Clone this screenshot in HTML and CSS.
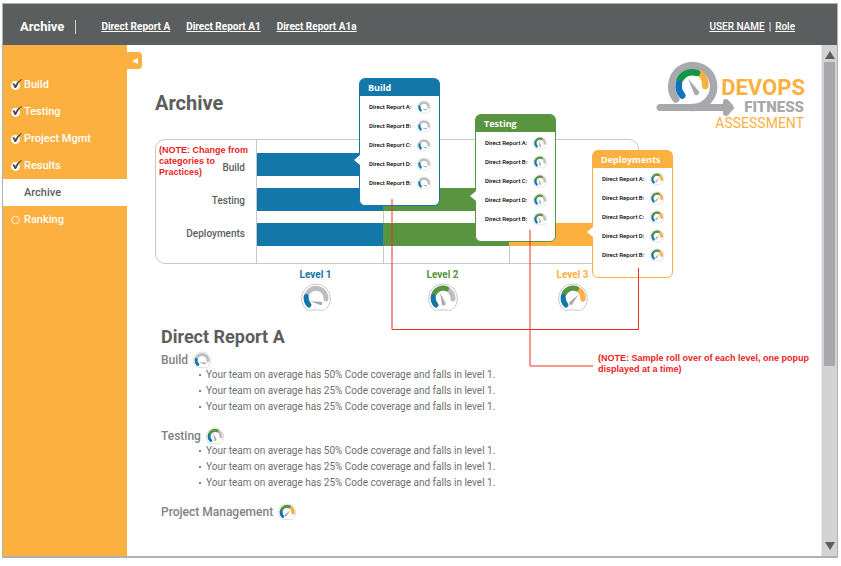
FILE: index.html
```html
<!DOCTYPE html>
<html lang="en">
<head>
<meta charset="utf-8">
<title>Archive</title>
<link rel="stylesheet" href="styles.css">
</head>
<body>
<svg class="defs" aria-hidden="true">
  <symbol id="dial" viewBox="0 0 30 29">
    <path d="M5.5 26.2A14.4 14.4 0 1 1 24.5 26.2C22 28.6 19.5 26.8 15 26.8S8 28.6 5.5 26.2Z" fill="#fff" stroke="#c7c8ca"/>
    <path d="M6 11A10 10 0 0 1 25 16" fill="none" stroke="#bcbdc0" stroke-width="5" stroke-linecap="round"/>
  </symbol>
  <symbol id="blue-arc" viewBox="0 0 30 29">
    <path d="M8 22A10 10 0 0 1 5.2 13.5" fill="none" stroke="#1477a9" stroke-width="5" stroke-linecap="round"/>
  </symbol>
  <symbol id="green-arc" viewBox="0 0 30 29">
    <path d="M6 11A10 10 0 0 1 18.500 5.600" fill="none" stroke="#599441" stroke-width="5" stroke-linecap="round"/>
  </symbol>
  <symbol id="level1" viewBox="0 0 30 29">
    <use href="#dial"/><use href="#blue-arc"/>
    <path d="M9 18.300L20.500 18.800A2 2 0 0 1 20 22.200Z" fill="#a7a9ac"/>
  </symbol>
  <symbol id="level2" viewBox="0 0 30 29">
    <use href="#dial"/><use href="#green-arc"/><use href="#blue-arc"/>
    <path d="M12 9.500L17.600 20.500A2 2 0 0 1 14 21.800Z" fill="#a7a9ac"/>
  </symbol>
  <symbol id="level3" viewBox="0 0 30 29">
    <use href="#dial"/>
    <path d="M20 6.300A10 10 0 0 1 25 16" fill="none" stroke="#fcb040" stroke-width="5" stroke-linecap="round"/>
    <use href="#green-arc"/><use href="#blue-arc"/>
    <path d="M20.500 11.500L14.200 21.600A2 2 0 0 1 11.300 19.200Z" fill="#a7a9ac"/>
  </symbol>
  <symbol id="check" viewBox="0 0 12 12">
    <circle cx="4.500" cy="6.400" r="4.500" fill="#fff"/>
    <path d="M1.300 4.200L3.400 4.400L4.400 6Q6.500 2 10.800 -0.200L11 0.300Q7 4 5 9H3.600Z" fill="#4a4d4e"/>
  </symbol>
  <symbol id="ring" viewBox="0 0 12 12">
    <circle cx="4.500" cy="6" r="3.800" fill="none" stroke="#fff" stroke-width="0.800"/>
  </symbol>
</svg>

<div class="window">
  <header class="topbar">
    <span class="brand">Archive</span>
    <nav class="crumbs">
      <a href="#">Direct Report A</a>
      <a href="#">Direct Report A1</a>
      <a href="#">Direct Report A1a</a>
    </nav>
    <div class="account"><a href="#">USER NAME</a><span>|</span><a href="#">Role</a></div>
  </header>

  <nav class="sidebar">
    <a href="#"><svg><use href="#check"/></svg>Build</a>
    <a href="#"><svg><use href="#check"/></svg>Testing</a>
    <a href="#"><svg><use href="#check"/></svg>Project Mgmt</a>
    <a href="#"><svg><use href="#check"/></svg>Results</a>
    <a href="#" class="active"><svg></svg>Archive</a>
    <a href="#"><svg><use href="#ring"/></svg>Ranking</a>
  </nav>

  <main class="content">
    <button class="collapse" aria-label="Collapse menu"><svg viewBox="0 0 6 6"><path d="M0 3L6 0V6Z" fill="#fff"/></svg></button>
    <div class="heading">
      <h1>Archive</h1>
      <svg class="logo" viewBox="0 0 150 70">
        <g fill="none" stroke-linecap="round">
          <path d="M19.800 39A21 21 0 1 1 36 47.500" stroke="#a7a9ac" stroke-width="7.500"/>
          <path d="M4 47.500H70" stroke="#a7a9ac" stroke-width="7"/>
          <path d="M44 13.500A14.500 14.500 0 0 1 49.300 26" stroke="#fcb040" stroke-width="6.500"/>
          <path d="M23.500 20.500A14 14 0 0 1 41 13" stroke="#0f9648" stroke-width="6.500"/>
          <path d="M26.300 35.500A14 14 0 0 1 23 23.500" stroke="#1073bd" stroke-width="6.500"/>
        </g>
        <path d="M70 42L75 47.500L70 53Z" fill="#a7a9ac" stroke="#a7a9ac" stroke-width="6" stroke-linejoin="round"/>
        <path d="M32 18.500L43 31.500A2.800 2.800 0 0 1 38.500 34.500Z" fill="#a7a9ac"/>
        <text class="logo-devops" x="149" y="35">DEVOPS</text>
        <text class="logo-fitness" x="148" y="52">FITNESS</text>
        <text class="logo-assessment" x="148" y="68">ASSESSMENT</text>
      </svg>
    </div>

    <section class="overview">
      <div class="chart">
        <div class="labels">
          <p class="note label-note">(NOTE: Change from categories to Practices)</p>
          <span>Build</span><span>Testing</span><span>Deployments</span>
        </div>
        <div class="tracks">
          <div class="bar"><i class="blue"></i></div>
          <div class="bar"><i class="blue"></i><i class="green"></i></div>
          <div class="bar"><i class="blue"></i><i class="green"></i><i class="orange"></i></div>
        </div>
      </div>
      <div class="levels">
        <div class="blue-text">Level 1<svg><use href="#level1"/></svg></div>
        <div class="green-text">Level 2<svg><use href="#level2"/></svg></div>
        <div class="orange-text">Level 3<svg><use href="#level3"/></svg></div>
      </div>

      <div class="popup popup-build">
        <h4>Build</h4>
        <ul>
          <li>Direct Report A:<svg><use href="#level1"/></svg></li>
          <li>Direct Report B:<svg><use href="#level1"/></svg></li>
          <li>Direct Report C:<svg><use href="#level1"/></svg></li>
          <li>Direct Report D:<svg><use href="#level1"/></svg></li>
          <li>Direct Report B:<svg><use href="#level1"/></svg></li>
        </ul>
      </div>
      <div class="popup popup-testing">
        <h4>Testing</h4>
        <ul>
          <li>Direct Report A:<svg><use href="#level2"/></svg></li>
          <li>Direct Report B:<svg><use href="#level2"/></svg></li>
          <li>Direct Report C:<svg><use href="#level2"/></svg></li>
          <li>Direct Report D:<svg><use href="#level2"/></svg></li>
          <li>Direct Report B:<svg><use href="#level2"/></svg></li>
        </ul>
      </div>
      <div class="popup popup-deploy">
        <h4>Deployments</h4>
        <ul>
          <li>Direct Report A:<svg><use href="#level3"/></svg></li>
          <li>Direct Report B:<svg><use href="#level3"/></svg></li>
          <li>Direct Report C:<svg><use href="#level3"/></svg></li>
          <li>Direct Report D:<svg><use href="#level3"/></svg></li>
          <li>Direct Report B:<svg><use href="#level3"/></svg></li>
        </ul>
      </div>
      <svg class="connectors" viewBox="0 0 490 230">
        <path d="M237 60V190.500H483.500V129M375 91V227H438" fill="none" stroke="#ec3323"/>
      </svg>
      <p class="note popup-note">(NOTE: Sample roll over of each level, one popup displayed at a time)</p>
    </section>

    <section class="report">
      <h2>Direct Report A</h2>
      <h3>Build<svg><use href="#level1"/></svg></h3>
      <ul>
        <li>Your team on average has 50% Code coverage and falls in level 1.</li>
        <li>Your team on average has 25% Code coverage and falls in level 1.</li>
        <li>Your team on average has 25% Code coverage and falls in level 1.</li>
      </ul>
      <h3>Testing<svg><use href="#level2"/></svg></h3>
      <ul>
        <li>Your team on average has 50% Code coverage and falls in level 1.</li>
        <li>Your team on average has 25% Code coverage and falls in level 1.</li>
        <li>Your team on average has 25% Code coverage and falls in level 1.</li>
      </ul>
      <h3>Project Management<svg><use href="#level3"/></svg></h3>
    </section>
  </main>

  <div class="scrollbar">
    <button aria-label="Scroll up"><svg viewBox="0 0 10 8"><path d="M5 0L10 8H0Z" fill="#5b5e5e"/></svg></button>
    <div class="thumb"></div>
    <button aria-label="Scroll down"><svg viewBox="0 0 10 8"><path d="M0 0H10L5 8Z" fill="#5b5e5e"/></svg></button>
  </div>
</div>
</body>
</html>
```
FILE: styles.css
```css
* { box-sizing: border-box; }

body {
  margin: 0;
  background: #fff;
  color: #5b5e5e;
  font-family: Roboto, "Liberation Sans", sans-serif;
  font-size: 10px;
}

h1, h2, h3, h4, p, ul { margin: 0; padding: 0; }
ul { list-style: none; }
svg { display: block; flex: none; }
a { color: inherit; }
button { border: 0; padding: 0; background: none; }
.defs { position: absolute; width: 0; height: 0; }

.window {
  display: grid;
  grid-template-columns: 124px 1fr 16px;
  grid-template-rows: 41px 1fr;
  min-height: calc(100vh - 11px);
  margin: 3px 3px 8px 2px;
  border: 1px solid #b0b2b2;
  border-bottom-width: 2px;
}

.topbar {
  grid-column: 1 / -1;
  display: flex;
  align-items: center;
  padding: 4px 42px 0 17px;
  background: #5b5e5e;
  color: #fff;
  font-weight: 500;
}
.brand {
  padding-right: 11px;
  border-right: 1px solid #d1d3d4;
  font-size: 13px;
  font-weight: 700;
  line-height: 14px;
}
.crumbs { display: flex; flex: 1; gap: 16px; margin-left: 25px; font-weight: 700; }
.account { display: flex; gap: 4px; }

.sidebar { padding-top: 26px; background: #fcb040; }
.sidebar a {
  display: flex;
  align-items: center;
  gap: 1px;
  height: 27px;
  padding-left: 8px;
  color: #fff;
  font-size: 11px;
  font-weight: 500;
  text-decoration: none;
}
.sidebar svg { width: 12px; height: 12px; overflow: visible; }
.sidebar .active { background: #fff; color: #5b5e5e; }

.content { position: relative; padding: 15px 15px 30px 28px; }
.collapse {
  position: absolute;
  top: 7px;
  left: 0;
  display: grid;
  place-items: center;
  width: 15px;
  height: 17px;
  border-radius: 0 4px 4px 0;
  background: #fcb040;
}
.collapse svg { width: 6px; height: 6px; }

.heading { display: flex; justify-content: space-between; align-items: flex-end; }
h1 { margin-bottom: 15px; font-size: 20px; line-height: 24px; }
.logo { width: 150px; height: 70px; overflow: visible; }
.logo text { text-anchor: end; }
.logo-devops { fill: #fcb040; font-size: 22px; font-weight: 700; }
.logo-fitness { fill: #a7a9ac; font-size: 15px; font-weight: 900; }
.logo-assessment { fill: #fcb040; font-size: 14px; font-weight: 400; }

.overview { position: relative; max-width: 484px; margin-top: 9px; }
.chart {
  display: grid;
  grid-template-columns: 101px 1fr;
  height: 125px;
  border: 1px solid #c7c8ca;
  border-radius: 10px;
}
.labels {
  position: relative;
  display: flex;
  flex-direction: column;
  padding: 11px 11px 0 0;
  border-right: 1px solid #c7c8ca;
  font-size: 10px;
  font-weight: 500;
  line-height: 33px;
  text-align: right;
}
.note {
  color: #ed1c24;
  font-family: "Liberation Sans", sans-serif;
  font-size: 9px;
  font-weight: 700;
  line-height: 11px;
  text-align: left;
}
.label-note { position: absolute; top: 5px; left: 3px; width: 92px; }

.tracks {
  display: flex;
  flex-direction: column;
  gap: 12px;
  padding: 13px 0 16px;
  background:
    linear-gradient(#c7c8ca, #c7c8ca) 126px 0 / 1px 100% no-repeat,
    linear-gradient(#c7c8ca, #c7c8ca) 252px 0 / 1px 100% no-repeat;
}
.bar { display: flex; height: 23px; }
.bar i { width: 126px; }
.blue { background: #1477a9; }
.green { background: #599441; }
.orange { background: #fcb040; }

.levels {
  display: grid;
  grid-template-columns: 127px 127px 1fr;
  margin: 4px 0 0 97px;
  font-size: 10px;
  font-weight: 700;
  line-height: 14px;
}
.levels div { display: flex; flex-direction: column; align-items: center; gap: 1px; }
.levels svg { width: 30px; height: 29px; }
.blue-text { color: #1477a9; }
.green-text { color: #599441; }
.orange-text { color: #fcb040; }

.popup {
  position: absolute;
  width: 81px;
  padding-bottom: 13px;
  border: 1px solid;
  border-radius: 6px;
  background: #fff;
}
.popup::before {
  content: "";
  position: absolute;
  top: 76px;
  left: -6px;
  border: solid transparent;
  border-width: 5px 6px 5px 0;
  border-right-color: #fff;
}
.popup h4 {
  height: 17px;
  padding-left: 8px;
  border-radius: 4px 4px 0 0;
  color: #fff;
  font-family: "Open Sans", sans-serif;
  font-size: 9px;
  line-height: 17px;
}
.popup ul { padding-top: 1px; }
.popup li {
  display: flex;
  align-items: center;
  justify-content: space-between;
  height: 19px;
  padding: 0 8px 0 9px;
  color: #000;
  font-size: 6px;
  font-weight: 500;
}
.popup svg { width: 14px; height: 14px; }
.popup-build { top: -61px; left: 204px; border-color: #1477a9; }
.popup-build h4 { background: #1477a9; }
.popup-testing { top: -25px; left: 320px; border-color: #599441; }
.popup-testing h4 { background: #599441; }
.popup-deploy { top: 11px; left: 437px; border-color: #fcb040; }
.popup-deploy h4 { background: #fcb040; }

.connectors { position: absolute; top: 0; left: 0; width: 490px; height: 230px; pointer-events: none; }
.popup-note { position: absolute; top: 214px; left: 443px; width: 218px; }

.report { padding: 14px 0 0 6px; }
h2 { font-size: 18px; line-height: 22px; }
h3 {
  display: flex;
  align-items: center;
  gap: 5px;
  height: 14px;
  margin-top: 14px;
  color: #808285;
  font-size: 12px;
  font-weight: 500;
}
h2 + h3 { margin-top: 5px; }
h3 svg { width: 18px; height: 18px; }
.report li {
  display: flex;
  align-items: center;
  gap: 5px;
  padding-left: 38px;
  color: #6d6f72;
  line-height: 16px;
}
.report li::before { content: ""; width: 2px; height: 2px; background: #808285; }

.scrollbar {
  display: flex;
  flex-direction: column;
  align-items: center;
  padding: 6px 0;
  border-left: 1px solid #e6e7e8;
  background: #d1d3d4;
}
.scrollbar svg { width: 10px; height: 8px; }
.thumb { width: 11px; height: 61%; margin: 3px 0 auto; background: #a7a9ac; }
```
